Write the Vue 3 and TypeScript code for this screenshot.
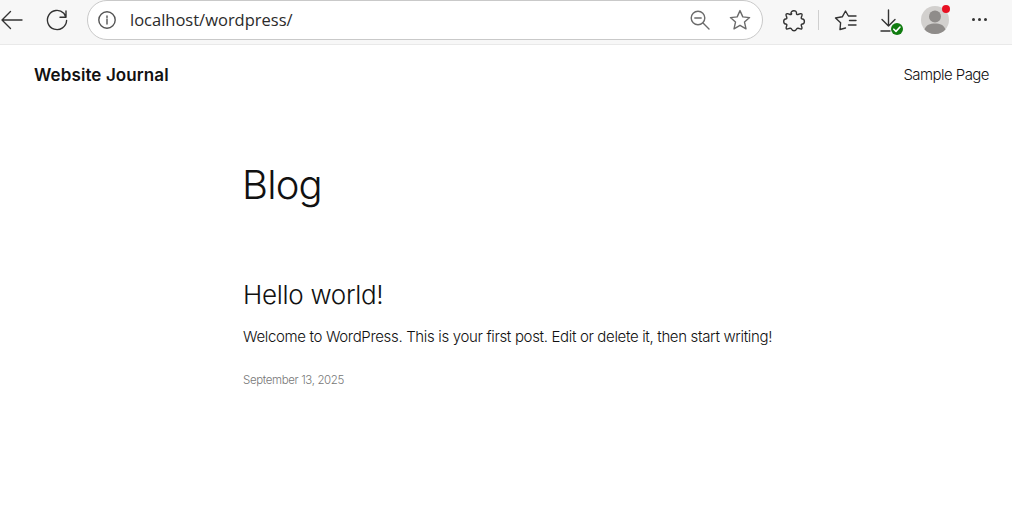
<script setup lang="ts">
const url = 'localhost/wordpress/'
</script>

<template>
  <div class="window">
    <div class="toolbar">
      <svg class="tb-icon back" width="24" height="24" viewBox="0 0 24 24">
        <path d="M22 12H2M10.5 3.5 2 12l8.5 8.5" />
      </svg>
      <svg class="tb-icon reload" width="24" height="24" viewBox="0 0 24 24">
        <path d="M21.600 12.500A9.600 9.600 0 1 1 18.800 5.200L20.800 8.800M21 3v6.200h-6" />
      </svg>
      <div class="address">
        <svg class="info" width="20" height="20" viewBox="0 0 20 20">
          <circle cx="10" cy="10" r="8.2" />
          <path d="M10 9v5M10 6v1.4" />
        </svg>
        <span class="url">{{ url }}</span>
        <svg class="zoom" width="22" height="22" viewBox="0 0 22 22">
          <circle cx="9" cy="9" r="6.8" />
          <path d="M5.8 9h6.4M14 14l6 6" />
        </svg>
        <svg class="star" width="24" height="24" viewBox="0 0 24 24">
          <path d="m12 2.6 2.8 6.3 6.8.7-5.100 4.500 1.500 6.700-6-3.500-6 3.500 1.500-6.700-5.100-4.500 6.800-.7z" />
        </svg>
      </div>
      <svg class="tb-icon puzzle" width="24" height="24" viewBox="0 0 24 24">
        <path d="M9 5.500C8.500 2 15 1.500 14.500 5.500c-.1 1 .6 1.300 1.500 1l2.500-.8c1.200-.3 1.800.4 1.500 1.500l-.7 2.300c-.3 1 .2 1.500 1.200 1.500 2.500.2 2.500 4.800 0 5-1 .1-1.500.6-1.200 1.500l.6 1.900c.3 1.100-.3 1.800-1.400 1.500l-2.400-.6c-1-.2-1.400.2-1.700 1-.7 1.900-4 1.900-4.700 0-.3-.8-.8-1.200-1.700-1l-2.400.6c-1.100.3-1.700-.4-1.400-1.500l.6-1.900c.3-.9-.2-1.400-1.200-1.500-2.500-.2-2.500-4.800 0-5 1 0 1.500-.5 1.200-1.500l-.7-2.300c-.3-1.100.3-1.800 1.500-1.500l2.500.8c.9.300 1.600 0 1.500-1z" />
      </svg>
      <span class="divider"></span>
      <svg class="tb-icon favs" width="24" height="24" viewBox="0 0 24 24">
        <path d="M12.500 20 7 21.500l.6-6.800L2.500 10l6.800-1.200L12.500 3l2.600 4.500M15.500 8H23M16.500 12.500H23M15.500 17H23" />
      </svg>
      <div class="download">
        <svg class="tb-icon" width="24" height="24" viewBox="0 0 24 24">
          <path d="M10.500 2v16M4 11.500l6.500 6.500 6.500-6.500M3 23h9" />
        </svg>
        <span class="done">
          <svg width="12" height="12" viewBox="0 0 12 12"><path d="m2.800 6.200 2.200 2.200 4-4.400" /></svg>
        </span>
      </div>
      <div class="profile">
        <svg width="28" height="28" viewBox="0 0 28 28">
          <circle class="avatar-bg" cx="14" cy="14" r="14" />
          <circle class="avatar-fg" cx="14" cy="10.500" r="6" />
          <path class="avatar-fg" d="M3.500 23.500C5 19 9 17.500 14 17.500s9 1.500 10.500 6A14 14 0 0 1 14 28a14 14 0 0 1-10.500-4.500z" />
        </svg>
        <span class="badge"></span>
      </div>
      <div class="more"><i></i><i></i><i></i></div>
    </div>

    <header class="site-header">
      <span class="site-title">Website Journal</span>
      <span class="nav-link">Sample Page</span>
    </header>

    <main class="content">
      <h1>Blog</h1>
      <h2>Hello world!</h2>
      <p class="excerpt">Welcome to WordPress. This is your first post. Edit or delete it, then start writing!</p>
      <p class="date">September 13, 2025</p>
    </main>
  </div>
</template>

<style>
html, body {
  margin: 0;
  background: #fff;
}
</style>

<style scoped>
.window {
  width: 1012px;
  height: 506px;
  overflow: hidden;
  font-family: Inter, "Liberation Sans", sans-serif;
  color: #111;
}

.toolbar {
  display: flex;
  align-items: center;
  height: 45px;
  box-sizing: border-box;
  background: #f7f7f7;
  border-bottom: 1px solid #e9e9e9;
  padding-bottom: 5px;
}

svg path, svg circle {
  fill: none;
  stroke: #333;
  stroke-width: 1.400;
  stroke-linecap: round;
  stroke-linejoin: round;
}

.back { margin-left: 0; }
.reload { margin-left: 21px; }

.address {
  display: flex;
  align-items: center;
  width: 676px;
  height: 40px;
  box-sizing: border-box;
  margin-left: 18px;
  padding: 0 10px 0 9px;
  background: #fff;
  border: 1px solid #c9c9c9;
  border-radius: 20px;
}

.info path, .info circle { stroke: #555; }
.url {
  flex: 1;
  margin-left: 13px;
  font-family: "Open Sans", "Noto Sans", sans-serif;
  font-size: 16.500px;
  color: #2b2b2b;
}
.zoom path, .zoom circle { stroke: #6b6b6b; }
.star { margin-left: 17px; }
.star path { stroke: #6b6b6b; }

.puzzle { margin-left: 19px; }
.divider {
  width: 1px;
  height: 20px;
  margin-left: 12px;
  background: #cfcfcf;
}
.favs { margin-left: 14px; }

.download {
  position: relative;
  display: flex;
  margin-left: 21px;
}
.done {
  position: absolute;
  right: -1px;
  bottom: -3px;
  display: flex;
  align-items: center;
  justify-content: center;
  width: 12px;
  height: 12px;
  border-radius: 50%;
  background: #107c10;
}
.done path { stroke: #fff; stroke-width: 1.600; }

.profile {
  position: relative;
  display: flex;
  margin-left: 19px;
}
.profile .avatar-bg { fill: #d2d0ce; stroke: none; }
.profile .avatar-fg { fill: #8f8c8a; stroke: none; }
.badge {
  position: absolute;
  top: -1px;
  right: -1px;
  width: 8px;
  height: 8px;
  border-radius: 50%;
  background: #e81123;
}

.more {
  display: flex;
  gap: 3px;
  margin-left: 23px;
}
.more i {
  width: 3px;
  height: 3px;
  border-radius: 50%;
  background: #333;
}

.site-header {
  display: flex;
  justify-content: space-between;
  align-items: center;
  height: 60px;
  padding: 0 23px 0 34px;
}
.site-title {
  font-size: 17px;
  font-weight: 600;
  letter-spacing: 0.1px;
}
.nav-link {
  margin-bottom: 2px;
  font-size: 15px;
  font-weight: 300;
  letter-spacing: -0.55px;
}

.content {
  padding-left: 243px;
}
h1, h2, p { margin: 0; }
h1 {
  margin-top: 49px;
  margin-left: -1px;
  font-size: 40px;
  line-height: 62px;
  font-weight: 300;
  letter-spacing: -0.8px;
}
h2 {
  margin-top: 60px;
  font-size: 26px;
  line-height: 38px;
  font-weight: 300;
  letter-spacing: -0.3px;
}
.excerpt {
  margin-top: 11px;
  font-size: 15px;
  line-height: 24px;
  font-weight: 300;
  letter-spacing: -0.34px;
}
.date {
  margin-top: 23px;
  font-size: 11.500px;
  line-height: 16px;
  font-weight: 300;
  letter-spacing: -0.37px;
  color: #777;
}
</style>
